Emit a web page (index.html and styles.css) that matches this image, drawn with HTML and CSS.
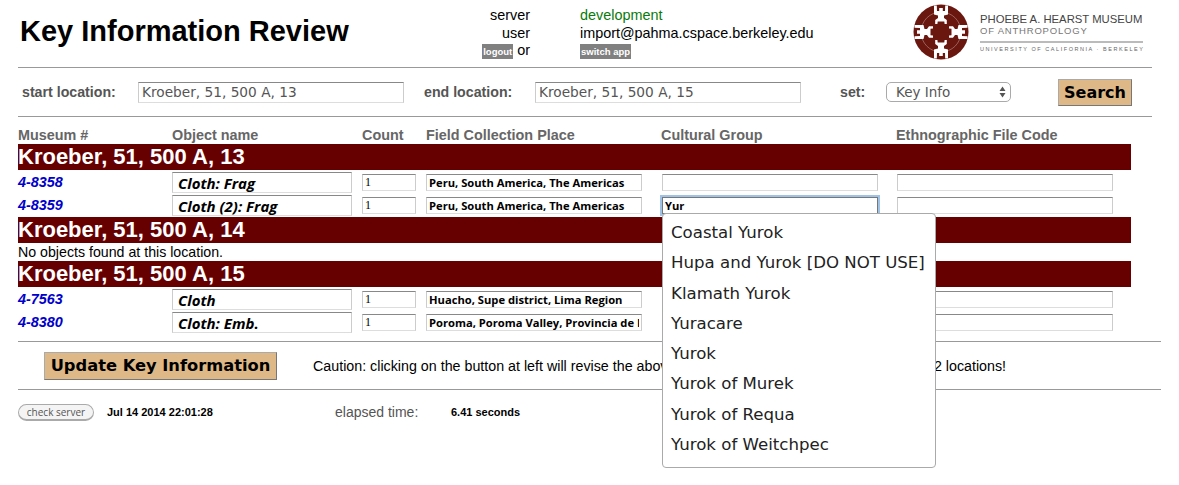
FILE: index.html
```html
<!DOCTYPE html>
<html>
<head>
    <title>Key Information Review</title>
    <link rel="stylesheet" href="styles.css">
</head>
<body>
    <div class="page">
        <div class="top">
            <h1>Key Information Review</h1>
            <div class="info">
                <div class="info-label">server</div>
                <div class="info-value green">development</div>
                <div class="info-label">user</div>
                <div class="info-value">import@pahma.cspace.berkeley.edu</div>
                <div class="info-label"><a class="tag" href="#">logout</a> or</div>
                <div class="info-value"><a class="tag" href="#">switch app</a></div>
            </div>
            <div class="logo">
                <svg width="56" height="56" viewBox="-28 -28 56 56">
                    <defs>
                        <path id="figure" d="M-7 -26.5 L-4.2 -26.5 L-4 -21 L-1.8 -21 L-1.8 -24 L1.8 -24 L1.8 -21 L4 -21 L4.2 -26.5 L7 -26.5 L7 -17.5 L3 -16.5 L3 -14 L5.8 -12 L5.8 -8 L3.6 -8 L3.3 -10.5 L-3.3 -10.5 L-3.6 -8 L-5.8 -8 L-5.8 -12 L-3 -14 L-3 -16.5 L-7 -17.5 Z"/>
                    </defs>
                    <circle r="27.5" fill="#6a1710"/>
                    <circle r="20" fill="none" stroke="#b98f86" stroke-width="0.6"/>
                    <g fill="#fff">
                        <use href="#figure"/>
                        <use href="#figure" transform="rotate(90)"/>
                        <use href="#figure" transform="rotate(180)"/>
                        <use href="#figure" transform="rotate(270)"/>
                    </g>
                </svg>
                <div class="logo-text">
                    <div class="logo-name">PHOEBE A. HEARST MUSEUM</div>
                    <div class="logo-sub">OF ANTHROPOLOGY</div>
                    <div class="logo-uni">UNIVERSITY OF CALIFORNIA · BERKELEY</div>
                </div>
            </div>
        </div>
        <hr class="rule">
        <form class="search">
            <label class="start-label">start location:</label>
            <input class="field loc" type="text" value="Kroeber, 51, 500 A, 13">
            <label class="end-label">end location:</label>
            <input class="field loc" type="text" value="Kroeber, 51, 500 A, 15">
            <label class="set-label">set:</label>
            <span class="set-box">
                <select class="set">
                    <option>Key Info</option>
                </select>
                <svg class="set-arrows" width="7" height="12" viewBox="0 0 7 12"><path d="M3.5 0.5 L6.5 5 L0.5 5 Z M3.5 11.5 L0.5 7 L6.5 7 Z" fill="#555"/></svg>
            </span>
            <button class="action search-btn" type="button">Search</button>
        </form>
        <hr class="rule">
        <table class="results">
            <colgroup>
                <col class="c1"><col class="c2"><col class="c3"><col class="c4"><col class="c5"><col class="c6">
            </colgroup>
            <tr class="heads">
                <th>Museum #</th><th>Object name</th><th>Count</th><th>Field Collection Place</th><th>Cultural Group</th><th>Ethnographic File Code</th>
            </tr>
            <tr><td colspan="6" class="bar">Kroeber, 51, 500 A, 13</td></tr>
            <tr class="row">
                <td><a class="num" href="#">4-8358</a></td>
                <td><input class="field name" type="text" value="Cloth: Frag"></td>
                <td><input class="field count" type="text" value="1"></td>
                <td><input class="field small" type="text" value="Peru, South America, The Americas"></td>
                <td><input class="field small shift" type="text"></td>
                <td><input class="field small shift" type="text"></td>
            </tr>
            <tr class="row tall">
                <td><a class="num" href="#">4-8359</a></td>
                <td><input class="field name" type="text" value="Cloth (2): Frag"></td>
                <td><input class="field count" type="text" value="1"></td>
                <td><input class="field small" type="text" value="Peru, South America, The Americas"></td>
                <td><input class="field small shift focus" type="text" value="Yur"></td>
                <td><input class="field small shift" type="text"></td>
            </tr>
            <tr><td colspan="6" class="bar">Kroeber, 51, 500 A, 14</td></tr>
            <tr><td colspan="6" class="none">No objects found at this location.</td></tr>
            <tr><td colspan="6" class="bar">Kroeber, 51, 500 A, 15</td></tr>
            <tr class="row">
                <td><a class="num" href="#">4-7563</a></td>
                <td><input class="field name" type="text" value="Cloth"></td>
                <td><input class="field count" type="text" value="1"></td>
                <td><input class="field small" type="text" value="Huacho, Supe district, Lima Region"></td>
                <td><input class="field small shift" type="text"></td>
                <td><input class="field small shift" type="text"></td>
            </tr>
            <tr class="row tall">
                <td><a class="num" href="#">4-8380</a></td>
                <td><input class="field name" type="text" value="Cloth: Emb."></td>
                <td><input class="field count" type="text" value="1"></td>
                <td><input class="field small" type="text" value="Poroma, Poroma Valley, Provincia de Nazca"></td>
                <td><input class="field small shift" type="text"></td>
                <td><input class="field small shift" type="text"></td>
            </tr>
        </table>
        <hr class="rule wide first">
        <div class="update">
            <button class="action update-btn" type="button">Update Key Information</button>
            <span class="caution">Caution: clicking on the button at left will revise the above records, and all objects located in these 2 locations!</span>
        </div>
        <hr class="rule wide">
        <div class="foot">
            <button class="check" type="button">check server</button>
            <span class="stamp">Jul 14 2014 22:01:28</span>
            <span class="elapsed">elapsed time:</span>
            <span class="stamp">6.41 seconds</span>
        </div>

        <ul class="menu">
            <li>Coastal Yurok</li>
            <li>Hupa and Yurok [DO NOT USE]</li>
            <li>Klamath Yurok</li>
            <li>Yuracare</li>
            <li>Yurok</li>
            <li>Yurok of Murek</li>
            <li>Yurok of Requa</li>
            <li>Yurok of Weitchpec</li>
        </ul>
    </div>
</body>
</html>
```

FILE: styles.css
```css
body { margin: 0; background: #fff; font-family: "Liberation Sans", Arial, sans-serif; color: #000; }
.page { position: relative; width: 1179px; height: 485px; padding-left: 18px; box-sizing: border-box; overflow: hidden; }

.top { display: flex; height: 67px; }
h1 { margin: 0; padding: 15px 0 0 2px; width: 380px; font-size: 29px; line-height: 33px; font-weight: bold; white-space: nowrap; }
.info { display: grid; grid-template-columns: 130px auto; grid-auto-rows: 17.5px; column-gap: 50px; padding-top: 7px; font-size: 14.4px; line-height: 17px; width: 514px; align-content: start; }
.info-label { text-align: right; }
.green { color: #0a7a0a; }
.tag { background: #808080; color: #fff; font-size: 9.5px; font-weight: bold; text-decoration: none; padding: 2px 1px; }

.logo { display: flex; gap: 11px; padding-top: 4px; margin-left: -1px; height: 56px; }
.logo-text { width: 163px; padding-top: 9px; }
.logo-name { font-size: 11.3px; line-height: 12px; color: #444; white-space: nowrap; }
.logo-sub { font-size: 9.5px; line-height: 12px; color: #777; letter-spacing: 0.8px; white-space: nowrap; }
.logo-uni { margin-top: 4px; border-top: 2px solid #bbb; padding-top: 2px; font-size: 5.5px; line-height: 8px; color: #666; letter-spacing: 1.55px; white-space: nowrap; }

.rule { margin: 0; width: 1134px; height: 0; border: 0; border-top: 1px solid #999; }
.rule.wide { width: 1143px; }
.rule.first { margin-top: 7px; }

.field { box-sizing: border-box; display: block; margin: 0; border: 1px solid #ccc; border-top-color: #888; border-bottom-color: #ddd; background: #fff; font-family: "Open Sans", sans-serif; color: #000; outline: none; }

.search { display: flex; align-items: center; height: 48px; font-size: 14.2px; font-weight: bold; color: #555; }
.start-label { width: 120px; padding-left: 4px; box-sizing: border-box; }
.end-label { width: 111px; margin-left: 20px; }
.set-label { width: 46px; margin-left: 39px; }
.loc { width: 266px; height: 21px; padding: 0 3px; font-family: "DejaVu Sans", sans-serif; font-size: 13.7px; color: #555; }
.set-box { position: relative; width: 125px; height: 20px; }
.set { display: block; appearance: none; width: 125px; height: 20px; border: 1px solid #aaa; border-radius: 5px; background: #fff; padding: 0 9px; font-family: "DejaVu Sans", sans-serif; font-size: 13.5px; color: #555; }
.set-arrows { position: absolute; right: 5px; top: 4px; }
.action { box-sizing: border-box; background: #deb887; border: 1px solid #aaa; border-right-color: #777; border-bottom-color: #777; font-family: "DejaVu Sans", sans-serif; font-weight: bold; color: #000; padding: 0; }
.search-btn { width: 74px; height: 27px; margin-left: 47px; font-size: 16px; }

.results { border-collapse: collapse; table-layout: fixed; width: 1113px; margin-top: 10px; }
.c1 { width: 154px; }
.c2 { width: 190px; }
.c3 { width: 64px; }
.c4, .c5, .c6 { width: 235px; }
.results td, .results th { padding: 0; }
.heads th { height: 17px; text-align: left; font-size: 14.4px; line-height: 17px; color: #666; white-space: nowrap; }
.bar { height: 26px; background: #660000; color: #fff; font-size: 22px; line-height: 26px; font-weight: bold; }
.none { height: 18px; font-size: 14.2px; line-height: 18px; }
.row { height: 23px; }
.row.tall { height: 24px; }
.row td { vertical-align: top; }
.num { display: block; padding-top: 1px; line-height: 22px; color: #0000cc; font-size: 14.4px; font-weight: bold; font-style: italic; text-decoration: none; }
.name { width: 180px; height: 21px; margin-top: 2px; padding: 0 5px; font-size: 15px; font-weight: bold; font-style: italic; }
.count { width: 54px; height: 17px; margin-top: 4px; padding: 0 2px; font-family: "Liberation Serif", serif; font-size: 12px; }
.small { width: 216px; height: 17px; margin-top: 4px; padding: 0 2px; font-size: 11.2px; font-weight: bold; }
.shift { margin-left: 1px; }
.focus { border: 1px solid #777; box-shadow: 0 0 0 2px #9fc3e6; }

.update { display: flex; align-items: center; height: 47px; padding-left: 26px; }
.update-btn { width: 233px; height: 28px; font-size: 16.3px; }
.caution { margin-left: 36px; font-size: 14.28px; white-space: nowrap; }

.foot { display: flex; align-items: center; height: 44px; font-size: 11px; }
.check { box-sizing: border-box; width: 76px; height: 17px; padding: 0; border: 1px solid #aaa; border-bottom-width: 2px; border-radius: 9px; background: #f4f4f4; font-family: "Open Sans", sans-serif; font-size: 10px; color: #555; }
.stamp { font-weight: bold; margin-left: 13px; width: 115px; white-space: nowrap; }
.elapsed { margin-left: 113px; width: 116px; font-size: 14px; color: #555; }
.foot .stamp:last-child { margin-left: 0; }

.menu { position: absolute; left: 662px; top: 213px; box-sizing: border-box; width: 274px; height: 255px; margin: 0; padding: 4px 0 0 8px; list-style: none; background: #fff; border: 1px solid #aaa; border-radius: 4px; font-family: "DejaVu Sans", sans-serif; font-size: 16.6px; color: #222; }
.menu li { height: 30.3px; line-height: 30px; white-space: nowrap; }
```
